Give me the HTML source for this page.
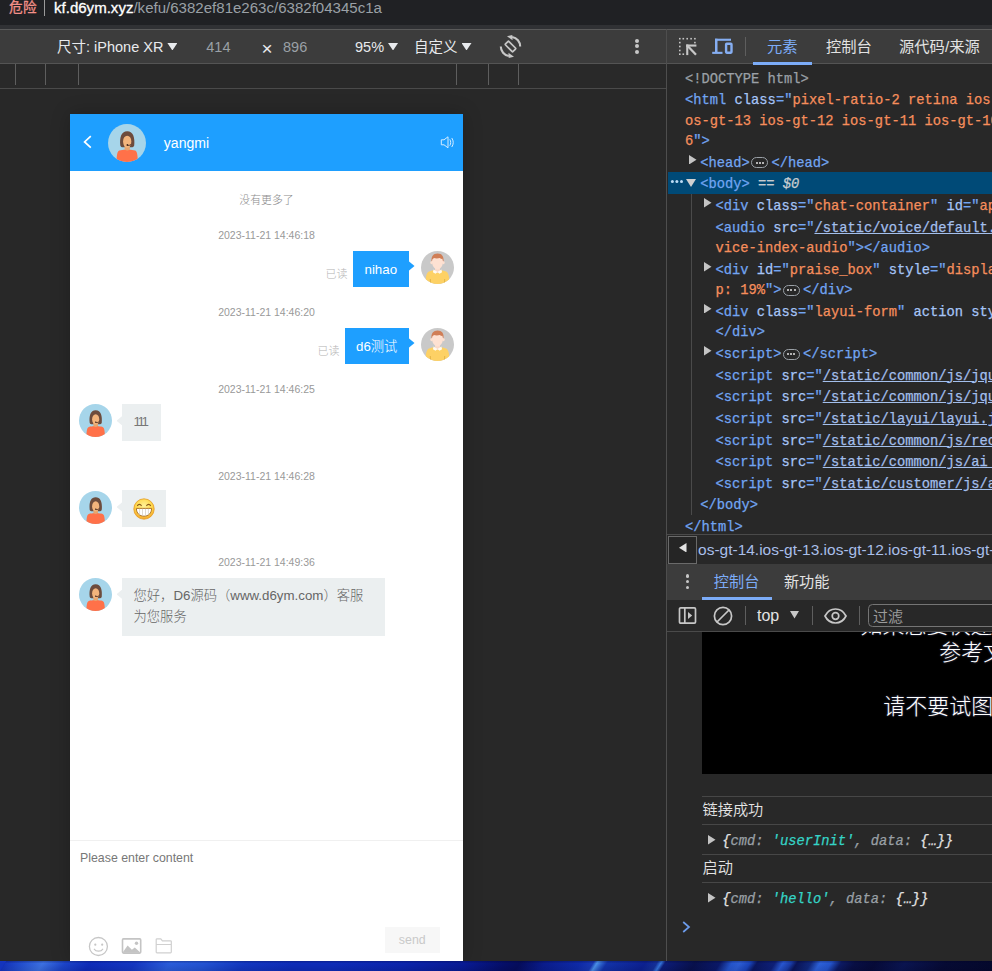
<!DOCTYPE html>
<html lang="zh-CN">
<head>
<meta charset="utf-8">
<title>kf.d6ym.xyz</title>
<style>
*{box-sizing:border-box;margin:0;padding:0}
html,body{width:992px;height:971px;overflow:hidden;background:#282828}
body{position:relative;font-family:"Liberation Sans","Noto Sans CJK SC",sans-serif;color:#e8eaed}
.abs{position:absolute}
.nw{white-space:nowrap}
/* ---------- top url bar ---------- */
#urlbar{left:0;top:0;width:992px;height:25px;background:#202124}
#urlstrip{left:0;top:25px;width:992px;height:5px;background:#303134}
#urlbar .danger{left:9px;top:-2px;font-size:13.600px;letter-spacing:0.400px;color:#f49088;line-height:20px;-webkit-text-stroke:0.300px #f49088}
#urlbar .sep{left:44px;top:0;width:1px;height:16px;background:#9a9a9a}
#urlbar .url{left:54px;top:-2.300px;font-size:15.050px;line-height:20px;color:#9aa0a6;letter-spacing:0}
#urlbar .url b{font-weight:normal;color:#fff;-webkit-text-stroke:0.3px #fff}
/* ---------- device toolbar ---------- */
#devbar{left:0;top:29px;width:666px;height:35px;background:#3c3c3c;border-top:1px solid #5a5a5a;border-bottom:1px solid #545454}
#devbar .t{top:6px;font-size:14.5px;line-height:22px;color:#e8eaed}
#devbar .g{color:#9aa0a6}
.tri{display:inline-block;width:10px;height:7.500px;background:#e8eaed;clip-path:polygon(0 0,100% 0,50% 100%);vertical-align:middle;margin-left:4px;position:relative;top:-1.500px}
/* ---------- ruler ---------- */
#ruler{left:0;top:64px;width:666px;height:25px;background:#292929;border-bottom:1px solid #4a4a4a}
#ruler i{position:absolute;top:0;width:1px;height:21px;background:#5e5e5e}
#stage{left:0;top:89px;width:667px;height:872px;background:#282828}
/* ---------- phone ---------- */
#phone{left:70px;top:114px;width:393px;height:847px;background:#fff;overflow:hidden;box-shadow:0 0 18px rgba(0,0,0,.22);color:#666;font-weight:300;font-family:"Liberation Sans","Noto Sans CJK SC",sans-serif}
#phead{left:0;top:0;width:393px;height:57px;background:#1e9fff}
#phead .name{left:93.800px;top:19px;font-size:14.050px;line-height:20px;color:#fff}
.time{left:0;width:393px;text-align:center;font-size:10.5px;line-height:14px;color:#999}
.bub{font-size:13px;line-height:20px;color:#666;background:#ebeff0}
.bub.me{background:#1e9fff;color:#fff}
.read{font-size:11px;line-height:14px;color:#b4b4b4}

.bub span{position:absolute;left:11.500px;top:7.500px;font-size:13.300px;line-height:21px}
.arr{position:absolute;top:10px;width:6px;height:10px}
.arr.r{right:-5.500px;background:#1e9fff;clip-path:polygon(0 0,100% 50%,0 100%)}
.arr.l{left:-5.500px;top:11.700px;background:#ebeff0;clip-path:polygon(100% 0,0 50%,100% 100%)}
/* ---------- devtools ---------- */
#dt{left:0;top:0;width:992px;height:971px}
#dttabs{left:667px;top:29px;width:325px;height:35px;background:#3c3c3c;border-top:1px solid #5a5a5a;border-bottom:1px solid #545454}
#dttabs .tab{top:6px;font-size:15.300px;line-height:22px;color:#e3e3e3}
.code{font-family:"Liberation Mono","DejaVu Sans Mono",monospace;font-size:13.750px;line-height:20px;white-space:pre;color:#e3e3e3;-webkit-text-stroke:0.250px}
.tg{color:#72a5f2}.an{color:#a6c5f7}.av{color:#f68e5c}.gy{color:#9aa0a6}.lk{color:#a3bfec;text-decoration:underline}
.eq{color:#c8ccd0}.eq em{font-style:italic}
.pill{display:inline-flex;align-items:center;justify-content:center;width:17px;height:11px;border:1px solid #9aa0a6;border-radius:5.500px;margin:0 3.200px 0 1.400px;vertical-align:3px;background:#282828}
.pill i{display:block;width:2px;height:2px;background:#e3e3e3;margin:0 0.600px;border-radius:50%}
.dotsv2 i{display:block;width:4px;height:4px;border-radius:50%;background:#c7c7c7;margin-bottom:1.900px}
.dotsv i{display:block;width:3.600px;height:3.600px;border-radius:50%;background:#c7c7c7;margin-bottom:2.200px}
.blk{font-family:"Liberation Sans","Noto Sans CJK SC",sans-serif;font-weight:300;font-size:22px;line-height:27px;color:#fff;text-shadow:0 0 2px rgba(170,180,255,.55)}
.hl{left:702.300px;width:290px;height:1px;background:#474747}
.cmsg{font-size:15.200px;line-height:22px;color:#e3e3e3;font-weight:350;font-family:"Liberation Sans","Noto Sans CJK SC",sans-serif}
.obj{font-style:italic;color:#e3e3e3}
.obj .k{color:#9aa0a6}.obj .s{color:#35d4c7}
#wall{left:0;top:961px;width:992px;height:10px;overflow:hidden;background:#0e2cb8}
#wall i{position:absolute;left:0;top:0;width:992px;height:10px;transform:skewX(-32deg);transform-origin:50% 100%;background:linear-gradient(180deg,rgba(0,0,30,.25),rgba(0,0,0,0) 25%,rgba(0,0,20,.1)),linear-gradient(90deg,#1434bc 0px,#2450d0 18px,#3c70e2 38px,#1c44c8 60px,#0e2cba 85px,#1436c2 130px,#2a5cda 165px,#2252d2 200px,#1236c0 240px,#0e2cb8 290px,#0e2cb8 330px,#0b24ac 400px,#081a94 460px,#050e68 500px,#050c5c 515px,#0a1c8c 540px,#0e2aa8 575px,#1838b4 588px,#4a90e8 592px,#2a5cc8 597px,#1232a8 602px,#0c2090 640px,#143098 652px,#3474dc 656px,#0c1c78 660px,#08104c 690px,#0a1868 715px,#2454cc 727px,#2c5cd4 735px,#1a44bc 745px,#0a1660 752px,#0e2078 770px,#2856d0 778px,#1a3ca8 786px,#0a1458 792px,#10287c 806px,#2c60d8 815px,#2454cc 826px,#0c1a64 836px,#080e44 850px,#060a38 870px,#0a1450 900px,#060a34 940px,#04082c 992px)}
#wall i:before{content:"";position:absolute;left:-10px;top:0;width:10px;height:10px;background:#1434bc}
</style>
</head>
<body>
<div id="urlbar" class="abs">
  <div class="abs nw danger">危险</div>
  <div class="abs sep"></div>
  <div class="abs nw url"><b>kf.d6ym.xyz</b>/kefu/6382ef81e263c/6382f04345c1a</div>
</div>
<div id="urlstrip" class="abs"></div>

<div id="devbar" class="abs">
  <div class="abs nw t" style="left:57px">尺寸: iPhone XR<span class="tri"></span></div>
  <div class="abs nw t g" style="left:206.300px">414</div>
  <div class="abs nw t" style="left:261.500px;top:7.500px;font-size:19px">×</div>
  <div class="abs nw t g" style="left:283px">896</div>
  <div class="abs nw t" style="left:355px">95%<span class="tri"></span></div>
  <div class="abs nw t" style="left:414px">自定义<span class="tri"></span></div>
  <svg class="abs" style="left:498px;top:4px" width="24" height="24" viewBox="0 0 24 24"><g fill="none" stroke="#c7c7c7"><rect x="7.150" y="10.050" width="10.700" height="4.900" rx="0.800" stroke-width="1.700" transform="rotate(45 12.500 12.500)"/><path d="M14.18 2.95A9.7 9.7 0 0 1 22.20 12.50" stroke-width="2.100"/><path d="M9 2.350L14.300 1L14.600 6.200z" fill="#c7c7c7" stroke="none"/><g transform="rotate(180 12.500 12.500)"><path d="M14.18 2.95A9.7 9.7 0 0 1 22.20 12.50" stroke-width="2.100"/><path d="M9 2.350L14.300 1L14.600 6.200z" fill="#c7c7c7" stroke="none"/></g></g></svg>
  <div class="abs dotsv2" style="left:635.400px;top:8.600px"><i></i><i></i><i></i></div>
</div>
<div id="ruler" class="abs">
  <i style="left:15px"></i><i style="left:45px"></i><i style="left:78px"></i>
  <i style="left:456px"></i><i style="left:488px"></i><i style="left:518px"></i>
</div>
<div id="stage" class="abs"></div>

<div id="phone" class="abs">
  <div id="phead" class="abs">
    <svg class="abs" style="left:12px;top:21px" width="12" height="14" viewBox="0 0 12 14"><path d="M8.800 1.200L2.600 6.900l6.200 5.700" fill="none" stroke="#fff" stroke-width="1.700"/></svg>
    <svg class="abs" style="left:38px;top:9.5px" width="38" height="38" viewBox="0 0 38 38"><defs><clipPath id="ch"><circle cx="19" cy="19" r="19"/></clipPath></defs><circle cx="19" cy="19" r="19" fill="#a6d5ea"/><g clip-path="url(#ch)"><path d="M12.3 21.5C11.5 14 13 7.2 19.2 7.2S27 14 26.2 21.5c-.3 1.6-2 1.8-3.6 1.7H15.8c-1.600.1-3.200-.1-3.500-1.700z" fill="#6d4c3d"/><rect x="16.600" y="20" width="5.200" height="8" fill="#e6a56e"/><path d="M15.100 17.500c0-3.500 1.700-5.500 4.100-5.700 2.400.2 4.100 2.200 4.100 5.700 0 3.800-1.900 6.100-4.100 6.100s-4.100-2.300-4.100-6.100z" fill="#f2b47c"/><path d="M19.200 20.800c.8.900 2.300.8 3.600-.3" stroke="#4a2c20" stroke-width="0.900" fill="none"/><circle cx="19.400" cy="21" r="0.900" fill="#4a2c20"/><path d="M8.600 38c0-6 .6-10.800 2.600-11.500 2-.6 4.300-.8 5.600-.8 1.300 1 3.500 1 4.800 0 1.300 0 3.600.2 5.600.8 2 .7 2.600 5.500 2.600 11.500z" fill="#ff7149"/></g></svg>
    <div class="abs nw name">yangmi</div>
    <svg class="abs" style="left:370px;top:20.600px" width="15" height="15" viewBox="0 0 15 15"><path d="M1.300 4.800h2.700L8 1.800v11L4 9.800H1.300z" fill="none" stroke="#d6edff" stroke-width="1" stroke-linejoin="round"/><path d="M10 4.700c1 1.600 1 4 0 5.600M12 3.300c1.700 2.500 1.700 5.900 0 8.400" fill="none" stroke="#d6edff" stroke-width="1" stroke-linecap="round"/></svg>
  </div>
  <div class="abs time" style="top:79px;font-size:10.900px;color:#8a8a8a">没有更多了</div>
  <div class="abs time" style="top:114px">2023-11-21 14:46:18</div>
  <div class="abs nw read" style="left:255.500px;top:153px">已读</div>
  <div class="abs nw bub me" style="left:283px;top:137px;width:56px;height:35.500px"><span>nihao</span><i class="arr r"></i></div>
  <svg class="abs" style="left:351px;top:137px" width="33" height="33" viewBox="0 0 33 33"><defs><clipPath id="u1"><circle cx="16.500" cy="16.500" r="16.500"/></clipPath></defs><circle cx="16.500" cy="16.500" r="16.500" fill="#c9c9c9"/><g clip-path="url(#u1)"><path d="M4.600 33c0-7 .8-11.500 3.400-12.500 2-.8 4.500-1.300 5.500-1.300h6c1 0 3.500.5 5.500 1.300 2.600 1 3.400 5.500 3.400 12.500z" fill="#fdd165"/><path d="M9.600 33l-.3-5M23.400 33l.3-5" stroke="#d9a93a" stroke-width="0.700" fill="none"/><path d="M14 15h5v5.500l-2.500 1.500-2.500-1.500z" fill="#fbd9c8"/><path d="M12.600 18.600l3.900 2.400-2 1.700-2.600-1.500zM20.400 18.600l-3.900 2.400 2 1.700 2.600-1.500z" fill="#fffaf0"/><ellipse cx="10.600" cy="11.600" rx="1.300" ry="1.600" fill="#fde0d0"/><ellipse cx="22.400" cy="11.600" rx="1.300" ry="1.600" fill="#fde0d0"/><path d="M11 10.500c0-4 2.200-6 5.500-6s5.500 2 5.500 6c0 4.300-2.600 8-5.500 8s-5.500-3.700-5.500-8z" fill="#fee1d2"/><path d="M10.600 10.600C9.800 5.500 12.500 2.600 16.600 2.600s6.700 2.900 5.800 8c-.5-.4-.8-1.700-1-2.800-1.300.3-2.200-.2-2.600-.7-1.700.6-4.300.6-5.900 0-.3.500-.9 1-1.400 1-.2 1-.4 2.100-.9 2.500z" fill="#d07e56"/></g></svg>
  <div class="abs time" style="top:191px">2023-11-21 14:46:20</div>
  <div class="abs nw read" style="left:247.500px;top:230px">已读</div>
  <div class="abs nw bub me" style="left:274.500px;top:214px;width:64.500px;height:36px"><span>d6测试</span><i class="arr r"></i></div>
  <svg class="abs" style="left:351px;top:214px" width="33" height="33" viewBox="0 0 33 33"><defs><clipPath id="u2"><circle cx="16.500" cy="16.500" r="16.500"/></clipPath></defs><circle cx="16.500" cy="16.500" r="16.500" fill="#c9c9c9"/><g clip-path="url(#u2)"><path d="M4.600 33c0-7 .8-11.500 3.400-12.500 2-.8 4.500-1.300 5.500-1.300h6c1 0 3.500.5 5.500 1.300 2.600 1 3.400 5.500 3.400 12.500z" fill="#fdd165"/><path d="M9.600 33l-.3-5M23.400 33l.3-5" stroke="#d9a93a" stroke-width="0.700" fill="none"/><path d="M14 15h5v5.500l-2.500 1.500-2.500-1.500z" fill="#fbd9c8"/><path d="M12.600 18.600l3.900 2.400-2 1.700-2.600-1.500zM20.400 18.600l-3.900 2.400 2 1.700 2.600-1.500z" fill="#fffaf0"/><ellipse cx="10.600" cy="11.600" rx="1.300" ry="1.600" fill="#fde0d0"/><ellipse cx="22.400" cy="11.600" rx="1.300" ry="1.600" fill="#fde0d0"/><path d="M11 10.500c0-4 2.200-6 5.500-6s5.500 2 5.500 6c0 4.300-2.600 8-5.500 8s-5.500-3.700-5.500-8z" fill="#fee1d2"/><path d="M10.600 10.600C9.800 5.500 12.500 2.600 16.600 2.600s6.700 2.900 5.800 8c-.5-.4-.8-1.700-1-2.800-1.300.3-2.200-.2-2.600-.7-1.700.6-4.300.6-5.900 0-.3.500-.9 1-1.400 1-.2 1-.4 2.100-.9 2.500z" fill="#d07e56"/></g></svg>
  <div class="abs time" style="top:268px">2023-11-21 14:46:25</div>
  <svg class="abs" style="left:9.200px;top:290px" width="33" height="33" viewBox="0 0 38 38"><defs><clipPath id="ca"><circle cx="19" cy="19" r="19"/></clipPath></defs><circle cx="19" cy="19" r="19" fill="#a6d5ea"/><g clip-path="url(#ca)"><path d="M12.3 21.5C11.5 14 13 7.2 19.2 7.2S27 14 26.2 21.5c-.3 1.6-2 1.8-3.6 1.7H15.8c-1.600.1-3.200-.1-3.500-1.700z" fill="#6d4c3d"/><rect x="16.600" y="20" width="5.200" height="8" fill="#e6a56e"/><path d="M15.100 17.500c0-3.500 1.700-5.500 4.100-5.700 2.400.2 4.100 2.200 4.100 5.700 0 3.800-1.900 6.100-4.100 6.100s-4.100-2.300-4.100-6.100z" fill="#f2b47c"/><path d="M19.200 20.800c.8.900 2.300.8 3.600-.3" stroke="#4a2c20" stroke-width="0.900" fill="none"/><circle cx="19.400" cy="21" r="0.900" fill="#4a2c20"/><path d="M8.600 38c0-6 .6-10.800 2.600-11.500 2-.6 4.300-.8 5.600-.8 1.300 1 3.500 1 4.800 0 1.300 0 3.600.2 5.600.8 2 .7 2.600 5.500 2.600 11.500z" fill="#ff7149"/></g></svg>
  <div class="abs nw bub" style="left:52px;top:290px;width:38.500px;height:36.500px"><span style="letter-spacing:-2.400px;top:6.800px;color:#777">111</span><i class="arr l"></i></div>
  <div class="abs time" style="top:355px">2023-11-21 14:46:28</div>
  <svg class="abs" style="left:9.200px;top:376.500px" width="33" height="33" viewBox="0 0 38 38"><defs><clipPath id="cb"><circle cx="19" cy="19" r="19"/></clipPath></defs><circle cx="19" cy="19" r="19" fill="#a6d5ea"/><g clip-path="url(#cb)"><path d="M12.3 21.5C11.5 14 13 7.2 19.2 7.2S27 14 26.2 21.5c-.3 1.6-2 1.8-3.6 1.7H15.8c-1.600.1-3.200-.1-3.500-1.700z" fill="#6d4c3d"/><rect x="16.600" y="20" width="5.200" height="8" fill="#e6a56e"/><path d="M15.100 17.500c0-3.500 1.700-5.500 4.100-5.700 2.400.2 4.100 2.200 4.100 5.700 0 3.800-1.900 6.100-4.100 6.100s-4.100-2.300-4.100-6.100z" fill="#f2b47c"/><path d="M19.200 20.800c.8.900 2.300.8 3.600-.3" stroke="#4a2c20" stroke-width="0.900" fill="none"/><circle cx="19.400" cy="21" r="0.900" fill="#4a2c20"/><path d="M8.600 38c0-6 .6-10.800 2.600-11.500 2-.6 4.300-.8 5.600-.8 1.300 1 3.500 1 4.800 0 1.300 0 3.600.2 5.600.8 2 .7 2.600 5.500 2.600 11.500z" fill="#ff7149"/></g></svg>
  <div class="abs nw bub" style="left:52px;top:376.200px;width:44px;height:36.600px"><i class="arr l"></i>
    <svg class="abs" style="left:11px;top:8px" width="22" height="22" viewBox="0 0 22 22"><defs><radialGradient id="eg" cx="50%" cy="35%" r="65%"><stop offset="0" stop-color="#fff29a"/><stop offset="0.600" stop-color="#ffd84a"/><stop offset="1" stop-color="#f4a62a"/></radialGradient></defs><circle cx="11" cy="11" r="10.200" fill="url(#eg)" stroke="#e59a22" stroke-width="0.800"/><path d="M4.500 7.600c.8-1.700 3-1.700 3.800 0M13.700 7.600c.8-1.700 3-1.700 3.800 0" fill="none" stroke="#8a5a1a" stroke-width="1.100" stroke-linecap="round"/><path d="M3.400 10.400h15.200c0 5-3.400 7.800-7.600 7.800s-7.600-2.800-7.600-7.800z" fill="#fff" stroke="#a8691c" stroke-width="0.900"/><path d="M6.600 10.600v6M9.500 10.600v7.400M12.500 10.600v7.400M15.400 10.600v6" stroke="#c9c2b4" stroke-width="0.600"/></svg>
  </div>
  <div class="abs time" style="top:441px">2023-11-21 14:49:36</div>
  <svg class="abs" style="left:9.200px;top:464px" width="33" height="33" viewBox="0 0 38 38"><defs><clipPath id="cc"><circle cx="19" cy="19" r="19"/></clipPath></defs><circle cx="19" cy="19" r="19" fill="#a6d5ea"/><g clip-path="url(#cc)"><path d="M12.3 21.5C11.5 14 13 7.2 19.2 7.2S27 14 26.2 21.5c-.3 1.6-2 1.8-3.6 1.7H15.8c-1.600.1-3.200-.1-3.500-1.700z" fill="#6d4c3d"/><rect x="16.600" y="20" width="5.200" height="8" fill="#e6a56e"/><path d="M15.100 17.500c0-3.500 1.700-5.500 4.100-5.700 2.400.2 4.100 2.200 4.100 5.700 0 3.800-1.900 6.100-4.100 6.100s-4.100-2.300-4.100-6.100z" fill="#f2b47c"/><path d="M19.200 20.800c.8.900 2.300.8 3.600-.3" stroke="#4a2c20" stroke-width="0.900" fill="none"/><circle cx="19.400" cy="21" r="0.900" fill="#4a2c20"/><path d="M8.600 38c0-6 .6-10.800 2.600-11.500 2-.6 4.300-.8 5.600-.8 1.300 1 3.500 1 4.800 0 1.300 0 3.600.2 5.600.8 2 .7 2.600 5.500 2.600 11.500z" fill="#ff7149"/></g></svg>
  <div class="abs bub" style="left:52px;top:463.500px;width:262.500px;height:58px"><span>您好，D6源码（www.d6ym.com）客服<br>为您服务</span><i class="arr l"></i></div>

  <div class="abs" style="left:0;top:726px;width:393px;height:1px;background:#f0f0f0"></div>
  <div class="abs nw" style="left:10px;top:735px;font-size:12.350px;line-height:18px;color:#777">Please enter content</div>
  <svg class="abs" style="left:18px;top:821.500px" width="21" height="21" viewBox="0 0 21 21"><circle cx="10.400" cy="10.500" r="9" fill="none" stroke="#c6c6c6" stroke-width="1.300"/><circle cx="7.300" cy="8.700" r="1.100" fill="#c6c6c6"/><circle cx="14.200" cy="8.700" r="1.100" fill="#c6c6c6"/><path d="M6.300 13.200c1.500 2.600 6.900 2.600 8.400 0" fill="none" stroke="#c6c6c6" stroke-width="1.300" stroke-linecap="round"/></svg>
  <svg class="abs" style="left:50.500px;top:824px" width="21" height="16" viewBox="0 0 21 16"><rect x="1.500" y="0.900" width="18.200" height="14.200" rx="1" fill="none" stroke="#c4c4c4" stroke-width="1.600"/><path d="M1.500 14.700L6.600 7.500l4.300 4.300 2.900-2.400 5.800 5.300z" fill="#c4c4c4"/><circle cx="15.500" cy="5.300" r="1.700" fill="#c4c4c4"/></svg>
  <svg class="abs" style="left:84.800px;top:824px" width="18" height="16" viewBox="0 0 18 16"><path d="M1.200 14V1.600c0-.5.400-.8.800-.8h3.800l1.600 2h8.100c.5 0 .8.400.8.800V14c0 .5-.4.800-.8.800H2c-.5 0-.8-.400-.8-.8zM1.200 6.500h15.100" fill="none" stroke="#d0d0d0" stroke-width="1.200"/></svg>
  <div class="abs nw" style="left:314.500px;top:813px;width:55.500px;height:25.500px;background:#f7f7f7;color:#c9c9c9;font-size:12.350px;line-height:27px;text-align:center">send</div>
</div>

<div id="dt" class="abs">
  <div class="abs" style="left:666px;top:29px;width:326px;height:932px;background:#282828;border-left:1px solid #4e4e4e"></div>
  <div id="dttabs" class="abs">
    <svg class="abs" style="left:11px;top:7px" width="20" height="20" viewBox="0 0 20 20"><g fill="#c7c7c7"><rect x="1.00" y="0.90" width="1.600" height="1.600"/><rect x="4.50" y="0.90" width="1.600" height="1.600"/><rect x="8.40" y="0.90" width="1.600" height="1.600"/><rect x="12.30" y="0.90" width="1.600" height="1.600"/><rect x="16.10" y="0.90" width="1.600" height="1.600"/><rect x="1.00" y="4.80" width="1.600" height="1.600"/><rect x="1.00" y="8.70" width="1.600" height="1.600"/><rect x="1.00" y="12.70" width="1.600" height="1.600"/><rect x="1.00" y="16.40" width="1.600" height="1.600"/><rect x="16.10" y="4.80" width="1.600" height="1.600"/><rect x="4.50" y="16.40" width="1.600" height="1.600"/><rect x="8.200" y="7.500" width="10.200" height="2.100"/><rect x="8.200" y="7.500" width="2.100" height="10.600"/></g><path d="M9.200 8.500L18 17.800" stroke="#c7c7c7" stroke-width="2.300" fill="none"/></svg>
    <svg class="abs" style="left:45px;top:8px" width="22" height="17" viewBox="0 0 22 17"><g fill="#86aef2"><rect x="3" y="0.700" width="16" height="2.100"/><rect x="3" y="0.700" width="2.500" height="13.800"/><rect x="0.200" y="13.800" width="10.300" height="2.100"/></g><rect x="14.100" y="5.800" width="5.400" height="8.900" rx="0.600" fill="none" stroke="#86aef2" stroke-width="2.400"/></svg>
    <div class="abs" style="left:78px;top:6.500px;width:1px;height:19.500px;background:#5e5e5e"></div>
    <div class="abs nw tab" style="left:100px;color:#7cacf8">元素</div>
    <div class="abs nw tab" style="left:159px">控制台</div>
    <div class="abs nw tab" style="left:232px">源代码/来源</div>
    <div class="abs" style="left:85.800px;top:31.500px;width:59px;height:3px;background:#7cacf8"></div>
  </div>
  <div class="abs" style="left:668px;top:172.300px;width:324px;height:21.400px;background:#004a77"></div>
  <div class="abs" style="left:691px;top:194px;width:1px;height:321px;background:#4a4a4a"></div>
  <div class="abs code" style="left:685.1px;top:70.3px"><span class="gy">&lt;!DOCTYPE html&gt;</span></div>
  <div class="abs code" style="left:685.1px;top:91.3px"><span class="tg">&lt;html </span><span class="an">class</span><span class="tg">="</span><span class="av">pixel-ratio-2 retina ios ios-gt-16 ios-gt-15 i</span></div>
  <div class="abs code" style="left:685.1px;top:111.8px"><span class="av">os-gt-13 ios-gt-12 ios-gt-11 ios-gt-10 ios-gt-9 ios-gt-8</span></div>
  <div class="abs code" style="left:685.1px;top:132.0px"><span class="av">6</span><span class="tg">"&gt;</span></div>
  <div class="abs code" style="left:700.3px;top:153.7px"><span class="tg">&lt;head&gt;</span><span class="pill"><i></i><i></i><i></i></span><span class="tg">&lt;/head&gt;</span></div>
  <div class="abs code" style="left:700.3px;top:175.3px"><span class="tg">&lt;body&gt;</span><span class="eq"> == <em>$0</em></span></div>
  <div class="abs code" style="left:715.4px;top:197.0px"><span class="tg">&lt;div </span><span class="an">class</span><span class="tg">="</span><span class="av">chat-container</span><span class="tg">" </span><span class="an">id</span><span class="tg">="</span><span class="av">app</span><span class="tg">"&gt;</span></div>
  <div class="abs code" style="left:715.4px;top:219.0px"><span class="tg">&lt;audio </span><span class="an">src</span><span class="tg">="</span><span class="lk">/static/voice/default.wav</span><span class="tg">" </span><span class="an">id</span></div>
  <div class="abs code" style="left:715.4px;top:239.2px"><span class="av">vice-index-audio</span><span class="tg">"&gt;&lt;/audio&gt;</span></div>
  <div class="abs code" style="left:715.4px;top:261.0px"><span class="tg">&lt;div </span><span class="an">id</span><span class="tg">="</span><span class="av">praise_box</span><span class="tg">" </span><span class="an">style</span><span class="tg">="</span><span class="av">display: none; to</span></div>
  <div class="abs code" style="left:715.4px;top:281.1px"><span class="av">p: 19%</span><span class="tg">"&gt;</span><span class="pill"><i></i><i></i><i></i></span><span class="tg">&lt;/div&gt;</span></div>
  <div class="abs code" style="left:715.4px;top:302.7px"><span class="tg">&lt;div </span><span class="an">class</span><span class="tg">="</span><span class="av">layui-form</span><span class="tg">" </span><span class="an">action style</span><span class="tg">="</span><span class="av">display</span></div>
  <div class="abs code" style="left:715.4px;top:323.0px"><span class="tg">&lt;/div&gt;</span></div>
  <div class="abs code" style="left:715.4px;top:345.2px"><span class="tg">&lt;script&gt;</span><span class="pill"><i></i><i></i><i></i></span><span class="tg">&lt;/script&gt;</span></div>
  <div class="abs code" style="left:715.4px;top:366.7px"><span class="tg">&lt;script </span><span class="an">src</span><span class="tg">="</span><span class="lk">/static/common/js/jquery.min.js</span><span class="tg">"&gt;&lt;/script&gt;</span></div>
  <div class="abs code" style="left:715.4px;top:388.3px"><span class="tg">&lt;script </span><span class="an">src</span><span class="tg">="</span><span class="lk">/static/common/js/jquery.cookie.js</span><span class="tg">"&gt;&lt;/script&gt;</span></div>
  <div class="abs code" style="left:715.4px;top:410.0px"><span class="tg">&lt;script </span><span class="an">src</span><span class="tg">="</span><span class="lk">/static/layui/layui.js</span><span class="tg">"&gt;&lt;/script&gt;</span></div>
  <div class="abs code" style="left:715.4px;top:431.6px"><span class="tg">&lt;script </span><span class="an">src</span><span class="tg">="</span><span class="lk">/static/common/js/reconnecting.js</span><span class="tg">"&gt;&lt;/script&gt;</span></div>
  <div class="abs code" style="left:715.4px;top:453.2px"><span class="tg">&lt;script </span><span class="an">src</span><span class="tg">="</span><span class="lk">/static/common/js/ai_service.js</span><span class="tg">"&gt;&lt;/script&gt;</span></div>
  <div class="abs code" style="left:715.4px;top:474.9px"><span class="tg">&lt;script </span><span class="an">src</span><span class="tg">="</span><span class="lk">/static/customer/js/app.js</span><span class="tg">"&gt;&lt;/script&gt;</span></div>
  <div class="abs code" style="left:700.3px;top:496.4px"><span class="tg">&lt;/body&gt;</span></div>
  <div class="abs code" style="left:685.1px;top:518.0px"><span class="tg">&lt;/html&gt;</span></div>

  <svg class="abs" style="left:689.3px;top:154.6px" width="7.5" height="9.5" viewBox="0 0 7.5 9.5"><path d="M0 0L7.5 4.75L0 9.5z" fill="#c4c4c4"/></svg>
  <svg class="abs" style="left:670px;top:179.400px" width="14" height="5" viewBox="0 0 14 5"><circle cx="2.400" cy="2.500" r="1.500" fill="#bcdcf5"/><circle cx="6.900" cy="2.500" r="1.500" fill="#bcdcf5"/><circle cx="11.500" cy="2.500" r="1.500" fill="#bcdcf5"/></svg>
  <svg class="abs" style="left:686.400px;top:178.800px" width="10" height="8" viewBox="0 0 10 8"><path d="M0 0H10L5 8z" fill="#d0d0d0"/></svg>
  <svg class="abs" style="left:704.3px;top:198px" width="7.5" height="9.5" viewBox="0 0 7.5 9.5"><path d="M0 0L7.5 4.75L0 9.5z" fill="#c4c4c4"/></svg>
  <svg class="abs" style="left:704.3px;top:262px" width="7.5" height="9.5" viewBox="0 0 7.5 9.5"><path d="M0 0L7.5 4.75L0 9.5z" fill="#c4c4c4"/></svg>
  <svg class="abs" style="left:704.3px;top:303.7px" width="7.5" height="9.5" viewBox="0 0 7.5 9.5"><path d="M0 0L7.5 4.75L0 9.5z" fill="#c4c4c4"/></svg>
  <svg class="abs" style="left:704.3px;top:346.2px" width="7.5" height="9.5" viewBox="0 0 7.5 9.5"><path d="M0 0L7.5 4.75L0 9.5z" fill="#c4c4c4"/></svg>

  <div class="abs" style="left:667px;top:534px;width:325px;height:30px;background:#282828;border-top:1px solid #4a4a4a"></div>
  <div class="abs" style="left:667.500px;top:535.500px;width:29.500px;height:28.200px;background:#252525;border:1px solid #6a6a6a"></div>
  <svg class="abs" style="left:679px;top:542.500px" width="7.500" height="9.500" viewBox="0 0 7.500 9.500"><path d="M7.500 0L0 4.750L7.500 9.500z" fill="#e3e3e3"/></svg>
  <div class="abs nw" style="left:698.100px;top:539.500px;font-size:15.480px;line-height:20px;color:#a9bfea">os-gt-14.ios-gt-13.ios-gt-12.ios-gt-11.ios-gt-10.ios-gt-9</div>

  <div class="abs" style="left:667px;top:564px;width:325px;height:35.500px;background:#3c3c3c"></div>
  <div class="abs dotsv" style="left:685.600px;top:574.100px"><i></i><i></i><i></i></div>
  <div class="abs nw" style="left:713.800px;top:571.200px;font-size:15.200px;line-height:22px;color:#7cacf8">控制台</div>
  <div class="abs nw" style="left:783.900px;top:571.200px;font-size:15.200px;line-height:22px;color:#e3e3e3">新功能</div>
  <div class="abs" style="left:702.300px;top:596.500px;width:69.500px;height:3px;background:#7cacf8"></div>

  <div class="abs" style="left:667px;top:599.500px;width:325px;height:32px;background:#282828;border-bottom:1px solid #4a4a4a"></div>
  <svg class="abs" style="left:678px;top:606px" width="19" height="19" viewBox="0 0 19 19"><rect x="1.500" y="1.800" width="16" height="15.400" rx="1.200" fill="none" stroke="#c7c7c7" stroke-width="1.700"/><path d="M6.800 1.800v15.400" stroke="#c7c7c7" stroke-width="1.700"/><path d="M10 6l4.200 3.500L10 13z" fill="#c7c7c7"/></svg>
  <svg class="abs" style="left:712.500px;top:605.500px" width="20" height="20" viewBox="0 0 20 20"><circle cx="10" cy="10" r="8.600" fill="none" stroke="#c7c7c7" stroke-width="1.700"/><path d="M4 16L16 4" stroke="#c7c7c7" stroke-width="1.700"/></svg>
  <div class="abs" style="left:745px;top:605.500px;width:1px;height:19px;background:#5e5e5e"></div>
  <div class="abs nw" style="left:757px;top:604.600px;font-size:16px;line-height:22px;color:#e3e3e3">top</div>
  <svg class="abs" style="left:790px;top:611.3px" width="9" height="7.5" viewBox="0 0 9 7.5"><path d="M0 0H9L4.5 7.5z" fill="#c7c7c7"/></svg>
  <div class="abs" style="left:812px;top:605.500px;width:1px;height:19px;background:#5e5e5e"></div>
  <svg class="abs" style="left:824px;top:607.500px" width="23" height="16" viewBox="0 0 23 16"><path d="M1 8C3.500 3 7 1 11.500 1S19.500 3 22 8c-2.500 5-6 7-10.500 7S3.500 13 1 8z" fill="none" stroke="#c7c7c7" stroke-width="1.700"/><circle cx="11.500" cy="8" r="3.300" fill="none" stroke="#c7c7c7" stroke-width="1.700"/></svg>
  <div class="abs" style="left:858.500px;top:605.500px;width:1px;height:19px;background:#5e5e5e"></div>
  <div class="abs" style="left:868px;top:603.500px;width:140px;height:23.500px;border:1px solid #757575;border-radius:4.500px"></div>
  <div class="abs nw" style="left:873px;top:605.500px;font-size:15px;line-height:22px;color:#9a9a9a">过滤</div>

  <div class="abs" style="left:702.300px;top:631.500px;width:290px;height:142.200px;background:#000;overflow:hidden">
    <div class="abs nw blk" style="left:158.200px;top:-19.100px">如果您要快速了解详情</div>
    <div class="abs nw blk" style="left:237px;top:7.900px">参考文档</div>
    <div class="abs nw blk" style="left:181px;top:61.600px">请不要试图破解</div>
  </div>
  <div class="abs hl" style="top:796px"></div>
  <div class="abs nw cmsg" style="left:702.500px;top:799.400px">链接成功</div>
  <div class="abs hl" style="top:824px"></div>
  <svg class="abs" style="left:708px;top:835px" width="7.5" height="9.5" viewBox="0 0 7.5 9.5"><path d="M0 0L7.5 4.75L0 9.5z" fill="#c4c4c4"/></svg>
  <div class="abs code obj" style="left:722.200px;top:831.600px">{<span class="k">cmd: </span><span class="s">'userInit'</span><span class="k">, data: </span>{…}}</div>
  <div class="abs hl" style="top:854px"></div>
  <div class="abs nw cmsg" style="left:702.500px;top:857.400px">启动</div>
  <div class="abs hl" style="top:882px"></div>
  <svg class="abs" style="left:708px;top:893px" width="7.5" height="9.5" viewBox="0 0 7.5 9.5"><path d="M0 0L7.5 4.75L0 9.5z" fill="#c4c4c4"/></svg>
  <div class="abs code obj" style="left:722.200px;top:889.500px">{<span class="k">cmd: </span><span class="s">'hello'</span><span class="k">, data: </span>{…}}</div>
  <svg class="abs" style="left:681.500px;top:921px" width="9" height="12" viewBox="0 0 9 12"><path d="M1.200 1l5.800 5-5.800 5" fill="none" stroke="#6c9cec" stroke-width="1.700"/></svg>
</div>

<div id="wall" class="abs"><i></i></div>
</body>
</html>
